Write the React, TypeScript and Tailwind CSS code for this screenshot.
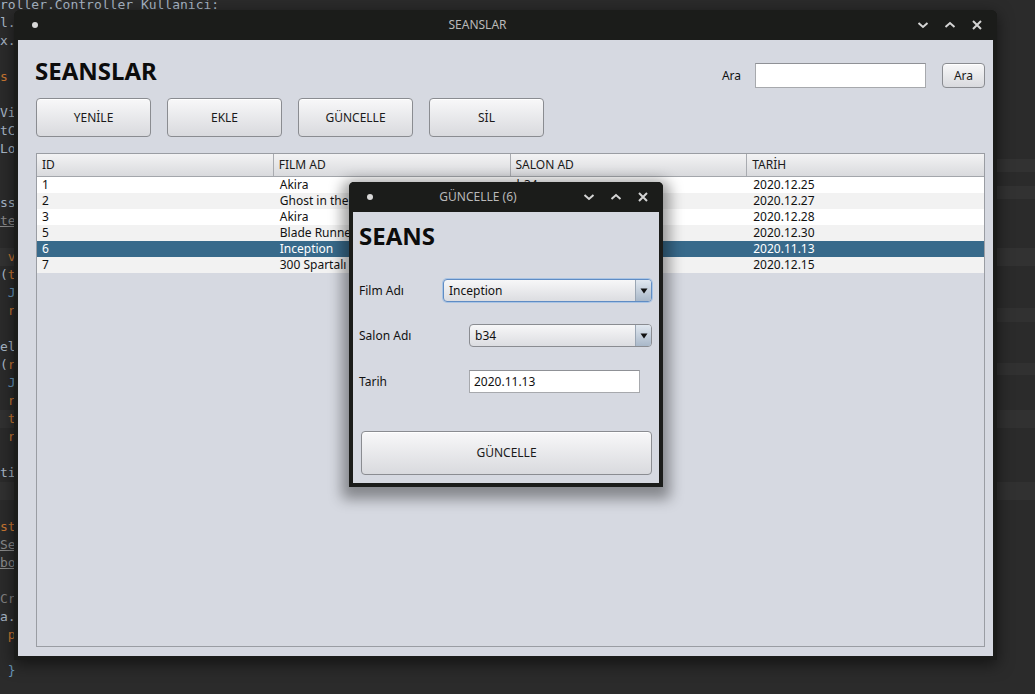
import React from "react";

type CodeLine = { parts: { t: string; c?: string; u?: boolean }[]; bg?: string };

// editor text peeking out behind the windows
const CODE: CodeLine[] = [
  { parts: [{ t: "roller.Controller Kullanici:" }] },
  { parts: [{ t: "l.getSelectionModel()" }] },
  { parts: [{ t: "x.setItems(list);" }] },
  { parts: [] },
  { parts: [{ t: "s", c: "text-[#cc7832]" }, { t: " void" }] },
  { parts: [] },
  { parts: [{ t: "ViewController" }] },
  { parts: [{ t: "tControl" }] },
  { parts: [{ t: "Loader" }] },
  { parts: [] },
  { parts: [] },
  { parts: [{ t: "ss" }, { t: "ion" }] },
  { parts: [{ t: "tec", c: "text-[#8a8a8a]", u: true }] },
  { parts: [] },
  { parts: [{ t: " " }, { t: "v", c: "text-[#cc7832]" }, { t: "oid" }], bg: "bg-[#323232]" },
  { parts: [{ t: "(" }, { t: "t", c: "text-[#cc7832]" }, { t: "ry" }] },
  { parts: [{ t: " " }, { t: "J", c: "text-[#6897bb]" }] },
  { parts: [{ t: " " }, { t: "r", c: "text-[#cc7832]" }] },
  { parts: [] },
  { parts: [{ t: "el" }, { t: "se" }] },
  { parts: [{ t: "(" }, { t: "r", c: "text-[#cc7832]" }] },
  { parts: [{ t: " " }, { t: "J", c: "text-[#6897bb]" }] },
  { parts: [{ t: " " }, { t: "r", c: "text-[#cc7832]" }] },
  { parts: [{ t: " " }, { t: "t", c: "text-[#cc7832]" }], bg: "bg-[#313131]" },
  { parts: [{ t: " " }, { t: "r", c: "text-[#cc7832]" }] },
  { parts: [] },
  { parts: [{ t: "ti" }, { t: "on" }] },
  { parts: [], bg: "bg-[#313131]" },
  { parts: [] },
  { parts: [{ t: "st", c: "text-[#cc7832]" }] },
  { parts: [{ t: "Se", c: "text-[#8a8a8a]", u: true }] },
  { parts: [{ t: "bol", c: "text-[#8a8a8a]", u: true }] },
  { parts: [] },
  { parts: [{ t: "Cr", c: "text-[#808080]" }] },
  { parts: [{ t: "a." }] },
  { parts: [{ t: " " }, { t: "p", c: "text-[#cc7832]" }] },
  { parts: [] },
  { parts: [{ t: " " }, { t: "}", c: "text-[#6897bb]" }] },
];

const ROWS = [
  { id: "1", film: "Akira", salon: "b34", tarih: "2020.12.25" },
  { id: "2", film: "Ghost in the Shell", salon: "a12", tarih: "2020.12.27" },
  { id: "3", film: "Akira", salon: "b34", tarih: "2020.12.28" },
  { id: "5", film: "Blade Runner", salon: "c21", tarih: "2020.12.30" },
  { id: "6", film: "Inception", salon: "b34", tarih: "2020.11.13" },
  { id: "7", film: "300 Spartalı", salon: "a12", tarih: "2020.12.15" },
];

function TitleBar({ title }: { title: string }) {
  return (
    <div className="flex h-[30px] items-center bg-[#1b1c1a]">
      <span className="ml-[18px] h-[6px] w-[6px] rounded-full bg-[#d8d8d8]" />
      <div className="flex-1 text-center text-[12px] text-[#b9b9b9]">{title}</div>
      <div className="flex items-center gap-[15px] pr-[14px]">
        <svg width="12" height="12" viewBox="0 0 12 12">
          <polyline points="1.5,4 6,8 10.5,4" fill="none" stroke="#d4d4d4" strokeWidth="2" />
        </svg>
        <svg width="12" height="12" viewBox="0 0 12 12">
          <polyline points="1.5,8 6,4 10.5,8" fill="none" stroke="#d4d4d4" strokeWidth="2" />
        </svg>
        <svg width="12" height="12" viewBox="0 0 12 12">
          <path d="M2 2 L10 10 M10 2 L2 10" stroke="#d4d4d4" strokeWidth="2" />
        </svg>
      </div>
    </div>
  );
}

function FxButton({ children, className }: { children: React.ReactNode; className?: string }) {
  return (
    <button
      className={`rounded-[4px] border border-[#8a8c91] bg-linear-to-b from-[#f8f8f9] to-[#d9dade] text-[12px] text-[#1a1a1a] shadow-[inset_0_1px_0_#ffffff] ${className ?? ""}`}
    >
      {children}
    </button>
  );
}

function Combo({ value, focused, className }: { value: string; focused?: boolean; className?: string }) {
  return (
    <div
      className={`flex h-[23px] items-stretch overflow-hidden rounded-[4px] border bg-linear-to-b from-[#f7f7f8] to-[#dcdde1] ${
        focused ? "border-[#5f8cc4] ring-1 ring-[#a9c4e4]" : "border-[#8a8c91]"
      } ${className ?? ""}`}
    >
      <span className="flex-1 pl-[5px] text-[12px] leading-[21px] text-[#111]">{value}</span>
      <span className="flex w-[16px] items-center justify-center border-l border-[#9aa6b4] bg-linear-to-b from-[#e1e8f0] to-[#a9b8c9]">
        <svg width="8" height="6" viewBox="0 0 8 6">
          <path d="M0.5 0.5 H7.5 L4 5.5 Z" fill="#111" />
        </svg>
      </span>
    </div>
  );
}

function TextInput({ value, className }: { value?: string; className?: string }) {
  return (
    <div
      className={`border border-[#a7a9ad] border-t-[#8f9196] bg-white pl-[4px] text-[12px] leading-[21px] text-[#111] ${className ?? ""}`}
    >
      {value}
    </div>
  );
}

export default function App() {
  return (
    <div className="relative h-[694px] w-[1035px] overflow-hidden bg-[#2b2b2b] font-['Noto_Sans',sans-serif]">
      {/* editor behind */}
      <div className="-mt-[4px] font-['DejaVu_Sans_Mono',monospace] text-[13px] leading-[18px] text-[#a9b7c6]">
        {CODE.map((line, i) => (
          <div key={i} className={`h-[18px] whitespace-pre ${line.bg ?? ""}`}>
            {line.parts.map((p, j) => (
              <span key={j} className={`${p.c ?? ""} ${p.u ? "underline" : ""}`}>
                {p.t}
              </span>
            ))}
          </div>
        ))}
      </div>
      <div className="absolute left-[997px] top-[159px] h-[13px] w-[38px] bg-[#323232]" />
      <div className="absolute left-[997px] top-[186px] h-[13px] w-[38px] bg-[#323232]" />
      <div className="absolute left-[997px] top-[308px] h-[14px] w-[38px] bg-[#313131]" />
      <div className="absolute left-[997px] top-[363px] h-[12px] w-[38px] bg-[#313131]" />

      {/* main window */}
      <div className="absolute left-[14px] top-[10px] w-[983px] overflow-hidden rounded-t-[6px] bg-[#1b1c1a] px-[4px] pb-[4px] shadow-[0_4px_16px_rgba(0,0,0,0.55)]">
        <div className="-mx-[4px]">
          <TitleBar title="SEANSLAR" />
        </div>
        <div className="flex h-[616px] flex-col bg-[#d6d9e1] pl-[18px] pr-[8px]">
          <div className="flex h-[58px] items-start justify-between">
            <h1 className="-ml-[1px] mt-[19px] text-[24px] font-bold leading-[24px] text-[#0c0c0c]">SEANSLAR</h1>
            <div className="mt-[23px] flex items-center">
              <span className="text-[12px] text-[#111]">Ara</span>
              <TextInput className="ml-[14px] h-[25px] w-[171px]" />
              <FxButton className="ml-[16px] h-[25px] w-[43px]">Ara</FxButton>
            </div>
          </div>
          <div className="flex gap-[16px]">
            {["YENİLE", "EKLE", "GÜNCELLE", "SİL"].map((b) => (
              <FxButton key={b} className="h-[39px] w-[115px]">
                {b}
              </FxButton>
            ))}
          </div>
          <div className="mt-[16px] h-[494px] border border-[#9a9da3] bg-[#d6d9e1]">
            <div className="grid h-[23px] grid-cols-4 border-b border-[#a3a6ab] bg-linear-to-b from-[#f3f3f4] to-[#d9dadd] text-[12px] text-[#1a1a1a]">
              {["ID", "FILM AD", "SALON AD", "TARİH"].map((h, i) => (
                <div key={h} className={`pl-[5px] leading-[22px] ${i < 3 ? "border-r border-[#a9abb0]" : ""}`}>
                  {h}
                </div>
              ))}
            </div>
            {ROWS.map((r, i) => {
              const selected = r.id === "6";
              const bg = selected ? "bg-[#386a8b] text-white" : i % 2 === 0 ? "bg-white text-[#111]" : "bg-[#f2f2f2] text-[#111]";
              return (
                <div key={r.id} className={`grid h-[16px] grid-cols-4 text-[12px] leading-[16px] ${bg}`}>
                  <div className="pl-[5px]">{r.id}</div>
                  <div className="pl-[6px]">{r.film}</div>
                  <div className="pl-[6px]">{r.salon}</div>
                  <div className="pl-[6px]">{r.tarih}</div>
                </div>
              );
            })}
          </div>
        </div>
      </div>

      {/* update dialog */}
      <div className="absolute left-[349px] top-[182px] w-[314px] overflow-hidden rounded-t-[5px] bg-[#1b1c1a] pb-[4px] shadow-[0_5px_14px_7px_rgba(0,0,0,0.38)]">
        <TitleBar title="GÜNCELLE (6)" />
        <div className="mx-[4px] flex h-[271px] flex-col bg-[#d6d9e1] pl-[6px] pr-[7px]">
          <h2 className="mt-[12px] text-[24px] font-bold leading-[24px] text-[#0c0c0c]">SEANS</h2>
          <div className="mt-[31px] flex items-center">
            <span className="w-[84px] text-[12px] text-[#111]">Film Adı</span>
            <Combo value="Inception" focused className="flex-1" />
          </div>
          <div className="mt-[22px] flex items-center">
            <span className="w-[110px] text-[12px] text-[#111]">Salon Adı</span>
            <Combo value="b34" className="flex-1" />
          </div>
          <div className="mt-[23px] flex items-center">
            <span className="w-[110px] text-[12px] text-[#111]">Tarih</span>
            <TextInput value="2020.11.13" className="h-[23px] w-[171px]" />
          </div>
          <FxButton className="ml-[2px] mt-[38px] h-[44px]">GÜNCELLE</FxButton>
        </div>
      </div>
    </div>
  );
}
